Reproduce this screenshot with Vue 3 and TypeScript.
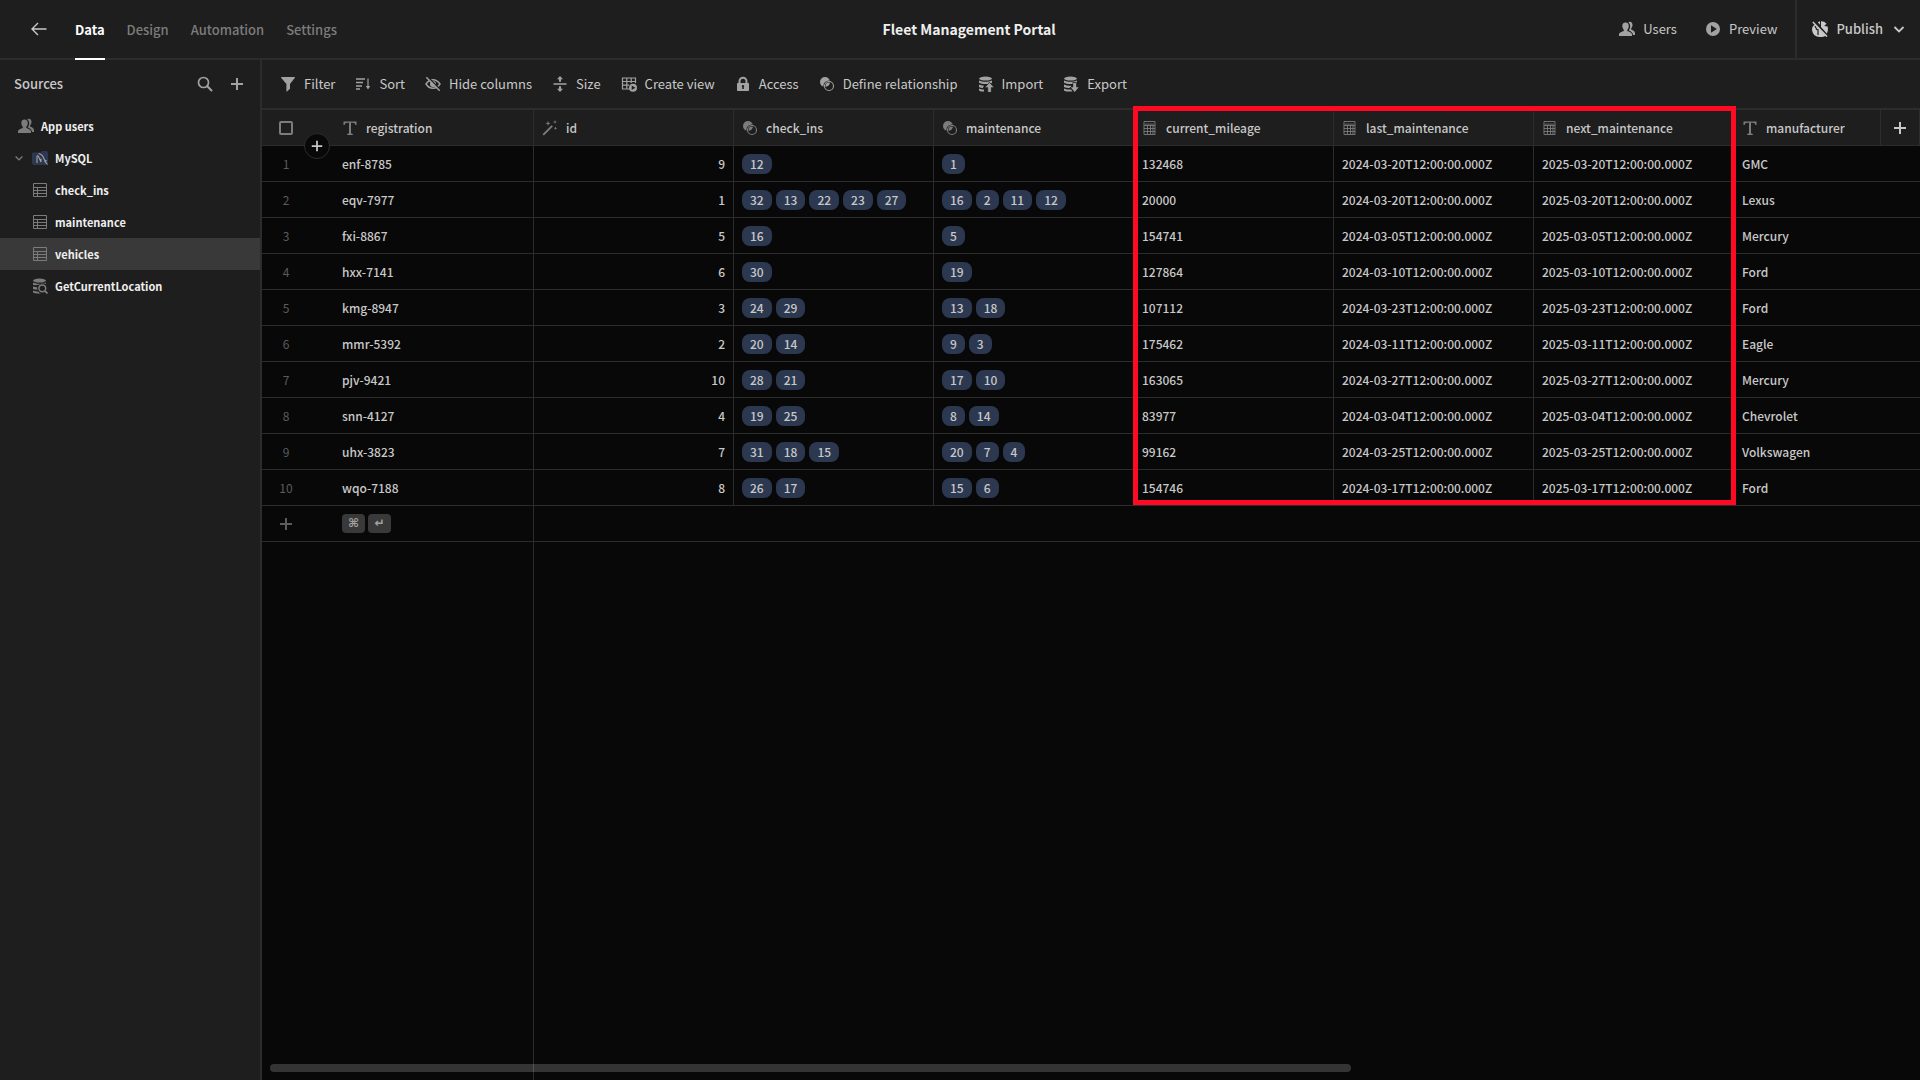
<script setup lang="ts">
import { ref } from 'vue'

interface Column {
  name: string
  icon: string
}

interface Row {
  registration: string
  id: number
  checkIns: number[]
  maintenance: number[]
  mileage: string
  last: string
  next: string
  manufacturer: string
}

const icons: Record<string, string> = {
  back: '<path d="M15.500 8H1.500M7 2 1 8l6 6" fill="none" stroke="currentColor" stroke-width="1.400"/>',
  search: '<circle cx="6.500" cy="6.500" r="5" fill="none" stroke="currentColor" stroke-width="1.700"/><path d="m10.300 10.300 4.200 4.200" stroke="currentColor" stroke-width="2" stroke-linecap="round"/>',
  plus: '<path d="M8 2v12M2 8h12" fill="none" stroke="currentColor" stroke-width="2"/>',
  chevron: '<path d="m3.500 6 4.500 4.500L12.500 6" fill="none" stroke="currentColor" stroke-width="1.800"/>',
  users: '<path d="M6.500 1.500C4.300 1.500 3.300 3 3.300 5c0 1.500.6 2.900 1.500 3.700v1.300C3 10.800 0 11.300 0 13.500V15h13v-1.500c0-2.200-3-2.700-4.700-3.500V8.700C9.200 7.900 9.800 6.500 9.800 5c0-2-1.100-3.500-3.300-3.500z"/><path d="M9.300 1.400c.5-.5 1-.7 1.600-.7 1.700 0 2.600 1.400 2.600 3.100 0 1.600-.5 2.800-1.400 3.600v1.200c1.500.8 3.900 1.400 3.900 3.400V14h-2.100c0-2.300-1.800-3.500-4-4.400V9.200c.8-1 1.300-2.500 1.300-4.100 0-1.500-.7-2.900-1.900-3.700z"/>',
  preview: '<path fill-rule="evenodd" d="M8 1a7 7 0 1 0 0 14A7 7 0 0 0 8 1zM6 4.300l5.800 3.700L6 11.700z"/>',
  publish: '<path d="M3.500 3.200 14 14.400c-1.600 1-3.700 1.600-6 1.600-4.500 0-8-3-8-8 0-2 1.300-3.600 3.500-4.800z"/><path d="M5.800 1.200 8 .3v3.400zM9 .3c2.500 0 4 .8 5.500 2.500L12.200 5l3.400.6c.6 2.500.4 5-.8 7L9 6z"/><path d="m1 .6 14.500 15M3 5l2 4M6 8v6" stroke="#1e1e1e" stroke-width="1.200" fill="none"/><path d="M.8 1 15 15.600" stroke="currentColor" stroke-width="1.500"/>',
  filter: '<path d="M1.400 1h13.200c.4 0 .5.400.3.700L10 8v4.800l-3 2.700c-.3.200-.6 0-.6-.3V8L1.100 1.700c-.2-.3-.1-.7.3-.7z"/>',
  sort: '<path d="M1 3h9M1 6.500h7M1 10h6M1 13h4" stroke="currentColor" stroke-width="1.600"/><path d="M13 2.500v8" stroke="currentColor" stroke-width="1.200"/><path d="M10.800 10h4.400L13 13.500z"/>',
  hide: '<path d="M1 8c2-3 4.300-4.300 7-4.300S13 5 15 8c-2 3-4.300 4.300-7 4.300S3 11 1 8z" fill="none" stroke="currentColor" stroke-width="1.400"/><circle cx="8" cy="8" r="3"/><path d="m2.500.700 13 13" stroke="#1e1e1e" stroke-width="1.500"/><path d="m1.300 1.300 13.400 13.400" stroke="currentColor" stroke-width="1.500"/>',
  size: '<path d="M1.500 7.200h13v1.600h-13zM8 0l3 3.200H9v2.600H7V3.200H5zM8 16l3-3.200H9v-2.600H7v2.600H5z"/>',
  view: '<path d="M9 13H1.500V2h13v5M1.500 5.500h13M1.500 9.200H8M5.800 2v11M10.200 2v5" fill="none" stroke="currentColor" stroke-width="1.200"/><path fill-rule="evenodd" d="M12 7.800a4 4 0 1 0 0 8 4 4 0 0 0 0-8zm-1.300 1.800 3.800 2.200-3.800 2.300z"/>',
  lock: '<path fill-rule="evenodd" d="M3.500 7V5.300a4.500 4.500 0 0 1 9 0V7h.8c.4 0 .7.300.7.700v6.600c0 .4-.3.700-.7.700H2.700a.7.700 0 0 1-.7-.7V7.700c0-.4.300-.7.700-.7zm2 0h5V5.300a2.500 2.500 0 0 0-5 0zm1.700 4v2h1.600v-2c.9-.6.4-2-.8-2s-1.700 1.400-.8 2z"/>',
  relation: '<circle cx="6" cy="6" r="5"/><circle cx="10" cy="10" r="4.500" fill="none" stroke="#1e1e1e" stroke-width="2.200"/><circle cx="10" cy="10" r="4.500" fill="none" stroke="currentColor" stroke-width="1.100"/><path d="M6.800 9.300c0-1.300 1.200-2.500 2.500-2.500 0 1.300-1.200 2.500-2.500 2.500z"/>',
  import: '<ellipse cx="7.500" cy="2.600" rx="6.500" ry="2"/><path d="M1 4.500c3.500 1.700 9.500 1.700 13 0v2.200c-1 .7-2.300 1-4 1.200-3.500.3-7 0-9-1.200zM1 8.500c1.500.8 3.200 1.100 5 1.200L4.800 12C3.200 11.900 2 11.500 1 11zM1 12.500c1.400.7 3 1 5 1.100v2c-2.500 0-4-.3-5-1.200z"/><path d="m11.500 6.300 4.800 5.400h-3V16.500H9.700v-4.800h-3z" stroke="#1e1e1e" stroke-width=".8"/>',
  export: '<ellipse cx="7.500" cy="2.600" rx="6.500" ry="2"/><path d="M1 4.500c3.500 1.700 9.500 1.700 13 0v1.700H9.500v1.700C6 8.200 3 7.800 1 6.700zM1 8.500c2 1 4.500 1.300 7 1.200v1.300H6.500l.7 1C4.500 12 2.500 11.700 1 11zM1 12.500c2 1 4.500 1.200 7 1.100l1.500 1.900C5.500 15.800 2.500 15.500 1 14.400z"/><path d="M10.200 7h3v4.200h2.500L11.700 16l-4-4.800h2.500z"/>',
  text: '<path d="M1.500 1.500h13V5h-1.100c-.3-1.500-.9-2.300-2.400-2.300H9v10.100c0 .7.500 1 1.800 1V15H5.200v-1.200c1.300 0 1.800-.3 1.800-1V2.700H5C3.500 2.700 2.900 3.500 2.600 5H1.500z"/>',
  wand: '<path d="m1.200 14.800 9-9" stroke="currentColor" stroke-width="1.900"/><path d="m6 1 .7 1.700L8.500 3.300l-1.800.8L6 6l-.7-1.900-1.800-.8 1.800-.6zM13 0l.5 1.400 1.500.6-1.500.6L13 4l-.5-1.400L11 2l1.500-.6zM13.500 6.500l.5 1.200 1.200.5-1.200.5-.5 1.300-.5-1.300-1.200-.5 1.200-.5z"/>',
  number: '<path d="M2 1.500h11v13H2zM2 5.500h11M2 8.500h11M2 11.500h11M5.500 5.500v9M8.500 5.500v9M11 5.500v9" fill="none" stroke="currentColor" stroke-width=".9"/><path d="M3 3.500h9v1.500H3z" opacity=".5"/>',
  table: '<path d="M1.500 1.500h13v13h-13zM1.500 5.500h13M1.500 8.500h13M1.500 11.500h13M5.500 5.500v9" fill="none" stroke="currentColor"/>',
  mysql: '<path d="M0 3 1.500 2.500H9L10 1h5l1 2v10.500L14.500 15h-13L0 13.500z" fill="#2c3850"/><path d="M5 13V6.500c0-1 1-1 1.500 0L9 12V8.500M6.500 3.500c3 .5 5 3 6 6.500l1.500.8-1 .7 2.500 3" fill="none" stroke="#a2a2a2" stroke-width="1.100"/>',
  query: '<ellipse cx="7.500" cy="2.600" rx="6.500" ry="2"/><path d="M1 4.500c3.500 1.700 9.500 1.700 13 0v1.600c-2-1.400-5-1.300-6.600.5C4.800 7.600 2.500 7.300 1 6.700zM1 8.500c1.400.6 2.700.8 4.200.8-.1.900 0 1.600.2 2.400C3.700 11.700 2.200 11.500 1 11zM1 12.500c1.700.8 3.500 1 5.200 1 .7 1 1.600 1.500 2.600 1.900-3.500.3-6.200 0-7.800-1z"/><circle cx="10.300" cy="10.300" r="3.400" fill="none" stroke="currentColor" stroke-width="1.500"/><path d="m12.800 12.800 2.700 2.700" stroke="currentColor" stroke-width="1.800"/>',
}

const tabs = ['Data', 'Design', 'Automation', 'Settings']
const activeTab = ref('Data')

const tables = [
  { name: 'check_ins', icon: 'table' },
  { name: 'maintenance', icon: 'table' },
  { name: 'vehicles', icon: 'table' },
  { name: 'GetCurrentLocation', icon: 'query' },
]
const activeTable = ref('vehicles')

const actions = [
  { label: 'Filter', icon: 'filter' },
  { label: 'Sort', icon: 'sort' },
  { label: 'Hide columns', icon: 'hide' },
  { label: 'Size', icon: 'size' },
  { label: 'Create view', icon: 'view' },
  { label: 'Access', icon: 'lock' },
  { label: 'Define relationship', icon: 'relation' },
  { label: 'Import', icon: 'import' },
  { label: 'Export', icon: 'export' },
]

const columns: Column[] = [
  { name: 'registration', icon: 'text' },
  { name: 'id', icon: 'wand' },
  { name: 'check_ins', icon: 'relation' },
  { name: 'maintenance', icon: 'relation' },
  { name: 'current_mileage', icon: 'number' },
  { name: 'last_maintenance', icon: 'number' },
  { name: 'next_maintenance', icon: 'number' },
  { name: 'manufacturer', icon: 'text' },
]

function row(registration: string, id: number, checkIns: number[], maintenance: number[], mileage: string, day: string, manufacturer: string): Row {
  const stamp = `03-${day}T12:00:00.000Z`
  return { registration, id, checkIns, maintenance, mileage, last: `2024-${stamp}`, next: `2025-${stamp}`, manufacturer }
}

const rows: Row[] = [
  row('enf-8785', 9, [12], [1], '132468', '20', 'GMC'),
  row('eqv-7977', 1, [32, 13, 22, 23, 27], [16, 2, 11, 12], '20000', '20', 'Lexus'),
  row('fxi-8867', 5, [16], [5], '154741', '05', 'Mercury'),
  row('hxx-7141', 6, [30], [19], '127864', '10', 'Ford'),
  row('kmg-8947', 3, [24, 29], [13, 18], '107112', '23', 'Ford'),
  row('mmr-5392', 2, [20, 14], [9, 3], '175462', '11', 'Eagle'),
  row('pjv-9421', 10, [28, 21], [17, 10], '163065', '27', 'Mercury'),
  row('snn-4127', 4, [19, 25], [8, 14], '83977', '04', 'Chevrolet'),
  row('uhx-3823', 7, [31, 18, 15], [20, 7, 4], '99162', '25', 'Volkswagen'),
  row('wqo-7188', 8, [26, 17], [15, 6], '154746', '17', 'Ford'),
]
</script>

<template>
  <div class="app">
    <header class="topbar">
      <button class="back" aria-label="Back"><svg class="icon" viewBox="0 0 16 16" v-html="icons.back" /></button>
      <nav class="tabs">
        <a v-for="tab in tabs" :key="tab" href="#" class="tab" :class="{ active: tab === activeTab }" @click.prevent="activeTab = tab">{{ tab }}</a>
      </nav>
      <h1 class="title">Fleet Management Portal</h1>
      <div class="links">
        <button class="action"><svg class="icon" viewBox="0 0 16 16" v-html="icons.users" />Users</button>
        <button class="action"><svg class="icon" viewBox="0 0 16 16" v-html="icons.preview" />Preview</button>
      </div>
      <button class="action publish">
        <svg class="icon" viewBox="0 0 16 16" v-html="icons.publish" />Publish
        <svg class="icon" viewBox="0 0 16 16" v-html="icons.chevron" />
      </button>
    </header>

    <div class="body">
      <aside class="sidebar">
        <div class="sources">
          <h2>Sources</h2>
          <button aria-label="Search"><svg class="icon" viewBox="0 0 16 16" v-html="icons.search" /></button>
          <button aria-label="Add source"><svg class="icon" viewBox="0 0 16 16" v-html="icons.plus" /></button>
        </div>
        <nav class="tree">
          <a href="#" class="node root"><svg class="icon" viewBox="0 0 16 16" v-html="icons.users" />App users</a>
          <a href="#" class="node source">
            <svg class="icon caret" viewBox="0 0 16 16" v-html="icons.chevron" />
            <svg class="icon" viewBox="0 0 16 16" v-html="icons.mysql" />MySQL
          </a>
          <a
            v-for="item in tables"
            :key="item.name"
            href="#"
            class="node child"
            :class="{ selected: item.name === activeTable }"
            @click.prevent="activeTable = item.name"
          ><svg class="icon" viewBox="0 0 16 16" v-html="icons[item.icon]" />{{ item.name }}</a>
        </nav>
      </aside>

      <main class="main">
        <div class="toolbar">
          <button v-for="a in actions" :key="a.label" class="action">
            <svg class="icon" viewBox="0 0 16 16" v-html="icons[a.icon]" />{{ a.label }}
          </button>
        </div>

        <div class="grid">
          <table>
            <colgroup>
              <col class="c-index">
              <col class="c-primary">
              <col v-for="n in 6" :key="n" class="c-data">
              <col>
              <col class="c-add">
            </colgroup>
            <thead>
              <tr>
                <th class="index"><input type="checkbox" aria-label="Select all rows"></th>
                <th v-for="(c, i) in columns" :key="c.name" :class="{ primary: i === 0 }">
                  <span class="heading"><svg class="icon" viewBox="0 0 16 16" v-html="icons[c.icon]" />{{ c.name }}</span>
                </th>
                <th class="add"><button aria-label="Add column"><svg class="icon" viewBox="0 0 16 16" v-html="icons.plus" /></button></th>
              </tr>
            </thead>
            <tbody>
              <tr v-for="(r, i) in rows" :key="r.id">
                <td class="index">{{ i + 1 }}</td>
                <td class="primary">{{ r.registration }}</td>
                <td class="number">{{ r.id }}</td>
                <td><span class="badges"><span v-for="n in r.checkIns" :key="n" class="badge">{{ n }}</span></span></td>
                <td><span class="badges"><span v-for="n in r.maintenance" :key="n" class="badge">{{ n }}</span></span></td>
                <td>{{ r.mileage }}</td>
                <td>{{ r.last }}</td>
                <td>{{ r.next }}</td>
                <td colspan="2" class="open">{{ r.manufacturer }}</td>
              </tr>
              <tr class="new-row">
                <td class="index"><button aria-label="Add row"><svg class="icon" viewBox="0 0 16 16" v-html="icons.plus" /></button></td>
                <td class="primary"><span class="keys"><kbd>⌘</kbd><kbd>↵</kbd></span></td>
                <td colspan="8" class="open"></td>
              </tr>
            </tbody>
          </table>
          <div class="rest"></div>
          <button class="insert" aria-label="Insert row"><svg class="icon" viewBox="0 0 16 16" v-html="icons.plus" /></button>
          <div class="highlight"></div>
          <div class="scrollbar"></div>
        </div>
      </main>
    </div>
  </div>
</template>

<style>
body {
  margin: 0;
  background: #080808;
}
</style>

<style scoped>
.app {
  display: flex;
  flex-direction: column;
  min-height: 100vh;
  background: #1e1e1e;
  color: #c8c8c8;
  font-family: 'Noto Sans CJK SC', 'Noto Sans', sans-serif;
  font-size: 13px;
  line-height: 20px;
}

.app * {
  box-sizing: border-box;
}

button {
  display: flex;
  align-items: center;
  padding: 0;
  border: 0;
  background: none;
  color: inherit;
  font: inherit;
  cursor: pointer;
}

a {
  color: inherit;
  text-decoration: none;
}

.icon {
  flex: none;
  width: 16px;
  height: 16px;
  fill: currentColor;
}

.action {
  gap: 8px;
  white-space: nowrap;
}

.action .icon {
  color: #a2a2a2;
}

.topbar {
  display: flex;
  align-items: stretch;
  height: 60px;
  border-bottom: 2px solid #2c2c2c;
}

.back {
  padding: 0 28px 0 31px;
}

.tabs {
  display: flex;
  gap: 22px;
}

.tab {
  height: 60px;
  color: #7c7c7c;
  font-weight: 500;
  line-height: 60px;
}

.tab.active {
  border-bottom: 2px solid #fff;
  color: #fff;
  font-weight: 700;
}

.title {
  flex: 1;
  margin: 0;
  padding-right: 18px;
  color: #efefef;
  font-size: 14px;
  font-weight: 700;
  line-height: 58px;
  text-align: center;
}

.links {
  display: flex;
  gap: 28px;
  padding-right: 18px;
}

.publish {
  padding: 0 13px 0 15px;
  border-left: 2px solid #2c2c2c;
  font-weight: 500;
}

.publish .icon {
  color: #c8c8c8;
}

.body {
  display: flex;
  flex: 1;
}

.sidebar {
  flex: none;
  width: 262px;
  border-right: 2px solid #2c2c2c;
}

.sources {
  display: flex;
  align-items: center;
  gap: 16px;
  height: 48px;
  padding: 0 15px 0 14px;
}

.sources h2 {
  flex: 1;
  margin: 0;
  font-size: 13px;
  font-weight: 500;
}

.sources button {
  color: #a2a2a2;
}

.tree {
  display: flex;
  flex-direction: column;
  padding-top: 2px;
  color: #efefef;
  font-size: 11px;
  font-weight: 700;
}

.node {
  display: flex;
  align-items: center;
  gap: 7px;
  height: 32px;
}

.node .icon {
  color: #7c7c7c;
}

.root {
  padding-left: 18px;
}

.source {
  padding-left: 13px;
}

.node .caret {
  width: 12px;
  height: 12px;
}

.child {
  padding-left: 32px;
}

.selected {
  background: #393939;
}

.main {
  display: flex;
  flex: 1;
  flex-direction: column;
  min-width: 0;
}

.toolbar {
  display: flex;
  align-items: center;
  gap: 20px;
  height: 50px;
  padding: 0 18px;
  border-bottom: 2px solid #2c2c2c;
}

.grid {
  position: relative;
  display: flex;
  flex: 1;
  flex-direction: column;
  background: #080808;
}

table {
  width: 100%;
  border-collapse: separate;
  border-spacing: 0;
  font-size: 12px;
  table-layout: fixed;
}

.c-index {
  width: 48px;
}

.c-primary {
  width: 224px;
}

.c-data {
  width: 200px;
}

.c-add {
  width: 39px;
}

th,
td {
  height: 36px;
  padding: 0 8px;
  border-right: 1px solid #2c2c2c;
  border-bottom: 1px solid #2c2c2c;
  font-weight: 500;
  text-align: left;
  white-space: nowrap;
}

th {
  background: #1e1e1e;
}

.index {
  padding: 0;
  border-right: 0;
  color: #5c5c5c;
  font-weight: 400;
  text-align: center;
}

.index button,
.add button {
  justify-content: center;
  width: 100%;
}

.index input {
  display: block;
  width: 14px;
  height: 14px;
  margin: 0 auto;
  border: 2px solid #7c7c7c;
  border-radius: 2px;
  appearance: none;
}

.primary {
  padding-left: 32px;
}

.number {
  text-align: right;
}

.open {
  border-right: 0;
}

.add {
  padding: 0;
}

.heading {
  display: flex;
  align-items: center;
  gap: 8px;
}

.heading .icon {
  color: #7c7c7c;
}

.badges,
.keys {
  display: flex;
  gap: 4px;
}

.badge {
  padding: 0 8px;
  border-radius: 8px;
  background: #2c3850;
}

.keys {
  gap: 3px;
}

kbd {
  width: 23px;
  height: 19px;
  border-radius: 4px;
  background: #393939;
  color: #a2a2a2;
  font-family: 'DejaVu Sans', sans-serif;
  font-size: 12px;
  font-weight: 700;
  line-height: 19px;
  text-align: center;
}

.rest {
  flex: 1;
  width: 272px;
  border-right: 1px solid #2c2c2c;
}

.insert {
  position: absolute;
  top: 23px;
  left: 42px;
  justify-content: center;
  width: 26px;
  height: 26px;
  border: 1px solid #2c2c2c;
  border-radius: 50%;
  background: #080808;
}

.insert .icon {
  width: 14px;
  height: 14px;
}

.highlight {
  position: absolute;
  top: -4px;
  left: 871px;
  width: 603px;
  height: 399px;
  border: 5px solid #ff0a22;
  pointer-events: none;
}

.scrollbar {
  position: absolute;
  bottom: 8px;
  left: 8px;
  width: 65.2%;
  height: 8px;
  border-radius: 4px;
  background: rgb(255 255 255 / 18%);
}
</style>
